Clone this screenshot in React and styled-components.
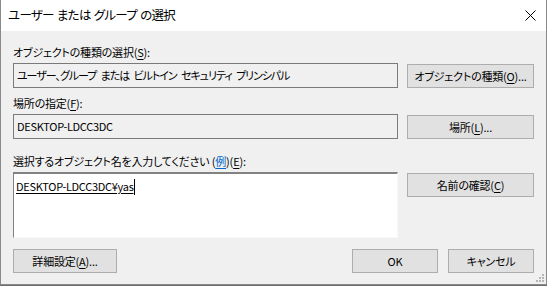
import React from "react";
import styled, { createGlobalStyle } from "styled-components";

const GlobalStyle = createGlobalStyle`
    html, body {
        margin: 0;
        padding: 0;
        background: #6d6d6d;
    }
    body {
        font-family: "Noto Sans CJK JP", "Noto Sans", sans-serif;
        font-feature-settings: "palt";
        font-size: 11px;
        color: #000;
    }
`;

const Window = styled.div`
    position: relative;
    width: 545px;
    height: 284px;
    background: #f0f0f0;
    border: 1px solid #8a8a8a;
    border-top: none;
    display: flex;
    flex-direction: column;
    overflow: hidden;
`;

const TitleBar = styled.div`
    height: 31px;
    background: #fff;
    display: flex;
    align-items: center;
    justify-content: space-between;
    padding: 0 0 0 7px;
    flex-shrink: 0;
`;

const Title = styled.span`
    font-size: 12.5px;
    letter-spacing: -0.7px;
    word-spacing: 1px;
    line-height: 20px;
    margin-top: -1px;
`;

const CloseButton = styled.div`
    width: 30px;
    height: 31px;
    display: flex;
    align-items: center;
    justify-content: center;
    margin-right: 1px;
`;

const Content = styled.div`
    padding: 0 12px;
    display: flex;
    flex-direction: column;
`;

const Label = styled.div`
    line-height: 16px;
    height: 16px;
    margin-top: ${(p) => p.$top}px;
    white-space: nowrap;
    letter-spacing: -0.2px;
`;

const Row = styled.div`
    display: flex;
    align-items: flex-start;
    gap: 9px;
    margin-top: ${(p) => p.$top}px;
`;

const ReadOnlyBox = styled.div`
    width: 386px;
    height: 25px;
    box-sizing: border-box;
    border: 1px solid #7a7a7a;
    background: #f0f0f0;
    display: flex;
    align-items: center;
    padding: 0 0 1px 3px;
    white-space: pre;
    overflow: hidden;
    letter-spacing: ${(p) => (p.$tight ? -1.05 : -0.3)}px;
    word-spacing: ${(p) => (p.$tight ? 3 : 0)}px;
`;

const EditBox = styled.div`
    width: 386px;
    height: 66px;
    box-sizing: border-box;
    border-style: solid;
    border-width: 2px 1px 1px 1px;
    border-color: #828282 #f9f9f9 #f9f9f9 #828282;
    background: #fff;
    padding: 4px 0 0 2px;
    white-space: nowrap;
    letter-spacing: -0.3px;
`;

const EditText = styled.span`
    text-decoration: underline;
    text-underline-offset: 2px;
    line-height: 16px;
`;

const Caret = styled.span`
    display: inline-block;
    width: 1px;
    height: 16px;
    background: #000;
    vertical-align: -4px;
    margin-left: 1px;
`;

const Button = styled.div`
    width: ${(p) => p.$w}px;
    height: 24px;
    box-sizing: border-box;
    border: 1px solid #adadad;
    background: #e1e1e1;
    display: flex;
    align-items: center;
    justify-content: center;
    padding-bottom: 1px;
    margin-top: ${(p) => p.$top || 0}px;
    white-space: nowrap;
    flex-shrink: 0;
    letter-spacing: -0.2px;
`;

const Footer = styled.div`
    display: flex;
    align-items: center;
    margin-top: 11px;
    gap: 10px;
`;

const Spacer = styled.div`
    flex: 1;
`;

const Key = styled.span`
    text-decoration: underline;
    text-underline-offset: 2px;
`;

const Link = styled.span`
    color: #0066cc;
    text-decoration: underline;
    text-underline-offset: 2px;
`;

const Grip = styled.svg`
    position: absolute;
    right: 1px;
    bottom: 1px;
`;

function App() {
    return (
        <>
            <GlobalStyle />
            <Window>
                <TitleBar>
                    <Title>ユーザー または グループ の選択</Title>
                    <CloseButton>
                        <svg width="11" height="11" viewBox="0 0 11 11">
                            <path d="M0.5 0.5 L10.5 10.5 M10.5 0.5 L0.5 10.5" stroke="#000" strokeWidth="1" />
                        </svg>
                    </CloseButton>
                </TitleBar>
                <Content>
                    <Label $top={13}>オブジェクトの種類の選択(<Key>S</Key>):</Label>
                    <Row $top={3}>
                        <ReadOnlyBox $tight>ユーザー、グループ または ビルトイン セキュリティ プリンシパル</ReadOnlyBox>
                        <Button $w={127} $top={1}>オブジェクトの種類(<Key>O</Key>)...</Button>
                    </Row>
                    <Label $top={7}>場所の指定(<Key>F</Key>):</Label>
                    <Row $top={3}>
                        <ReadOnlyBox>DESKTOP-LDCC3DC</ReadOnlyBox>
                        <Button $w={127} $top={1}>場所(<Key>L</Key>)...</Button>
                    </Row>
                    <Label $top={14}>選択するオブジェクト名を入力してください (<Link>例</Link>)(<Key>E</Key>):</Label>
                    <Row $top={3}>
                        <EditBox>
                            <EditText>DESKTOP-LDCC3DC¥yas</EditText>
                            <Caret />
                        </EditBox>
                        <Button $w={127} $top={1}>名前の確認(<Key>C</Key>)</Button>
                    </Row>
                    <Footer>
                        <Button $w={104}>詳細設定(<Key>A</Key>)...</Button>
                        <Spacer />
                        <Button $w={86}>OK</Button>
                        <Button $w={86}>キャンセル</Button>
                    </Footer>
                </Content>
                <Grip width="10" height="10" viewBox="0 0 10 10">
                    <rect x="7" y="1" width="2" height="2" fill="#b5b5b5" />
                    <rect x="4" y="4" width="2" height="2" fill="#b5b5b5" />
                    <rect x="7" y="4" width="2" height="2" fill="#b5b5b5" />
                    <rect x="1" y="7" width="2" height="2" fill="#b5b5b5" />
                    <rect x="4" y="7" width="2" height="2" fill="#b5b5b5" />
                    <rect x="7" y="7" width="2" height="2" fill="#b5b5b5" />
                </Grip>
            </Window>
        </>
    );
}

export default App;
